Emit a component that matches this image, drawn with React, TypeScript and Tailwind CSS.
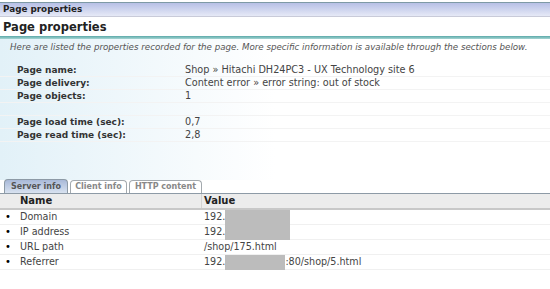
const props = [
  { label: 'Page name:', value: 'Shop » Hitachi DH24PC3 - UX Technology site 6' },
  { label: 'Page delivery:', value: 'Content error » error string: out of stock' },
  { label: 'Page objects:', value: '1' },
]

const times = [
  { label: 'Page load time (sec):', value: '0,7' },
  { label: 'Page read time (sec):', value: '2,8' },
]

const rows = [
  { name: 'Domain', prefix: '192.', hidden: 'w-[65px]', suffix: '' },
  { name: 'IP address', prefix: '192.', hidden: 'w-[65px]', suffix: '' },
  { name: 'URL path', prefix: '/shop/175.html', hidden: '', suffix: '' },
  { name: 'Referrer', prefix: '192.', hidden: 'w-[60px]', suffix: ':80/shop/5.html' },
]

function PropRow({ label, value }: { label: string; value: string }) {
  return (
    <div className="flex h-[13px] items-center border-b border-[#f3f3f3]">
      <div className="w-[185px] pl-[17px] font-bold text-[#333]">{label}</div>
      <div className="text-[9.7px] text-[#444]">{value}</div>
    </div>
  )
}

export default function App() {
  return (
    <div className="w-[550px] h-[289px] overflow-hidden bg-white text-[9px] leading-none" style={{ fontFamily: '"DejaVu Sans", Verdana, sans-serif' }}>
      {/* cut-off strip on top */}
      <div className="h-[3px] bg-white border-b border-[#7e9aa6]" />

      {/* window title bar */}
      <div className="h-[14px] flex items-center pl-[3px] font-bold text-[8.8px] text-[#222] bg-gradient-to-b from-[#b7c0e6] to-[#e6e9f6] border-b border-[#c9cbd9]">
        Page properties
      </div>

      {/* heading */}
      <div className="h-[19px] flex items-end pl-[3px] pb-[3px] font-bold text-[11.5px] text-[#222]">
        Page properties
      </div>
      <div className="h-[3px] bg-gradient-to-b from-[#5aa9a9] to-[#a6d6d4]" />

      {/* body */}
      <div className="bg-gradient-to-r from-[#e2f1f8] via-white to-white">
        <div className="pt-[4px] pl-[10px] h-[25px] italic text-[8.7px] text-[#555]">
          Here are listed the properties recorded for the page. More specific information is available through the sections below.
        </div>

        <div className="flex flex-col">
          {props.map((p) => (
            <PropRow key={p.label} {...p} />
          ))}
          <div className="h-[13px] border-b border-[#f3f3f3]" />
          {times.map((p) => (
            <PropRow key={p.label} {...p} />
          ))}
        </div>

        <div className="h-[38px]" />
      </div>

      {/* tabs */}
      <div className="flex items-end gap-[2px] pl-[4px] h-[14px] border-b border-[#8d9aa6]">
        <div className="h-[14px] w-[64px] flex items-center justify-center rounded-t-[4px] border border-b-0 border-[#8d9aa6] bg-gradient-to-b from-[#a9b9d8] to-[#d8e2f0] font-bold text-[8px] text-[#555]">
          Server info
        </div>
        <div className="h-[13px] w-[57px] flex items-center justify-center rounded-t-[4px] border border-b-0 border-[#a3a9ae] bg-white font-bold text-[8px] text-[#888]">
          Client info
        </div>
        <div className="h-[13px] w-[73px] flex items-center justify-center rounded-t-[4px] border border-b-0 border-[#a3a9ae] bg-white font-bold text-[8px] text-[#888]">
          HTTP content
        </div>
      </div>

      {/* table */}
      <div className="flex h-[16px] items-center bg-[#ececec] border-b-2 border-[#c8c8c8] font-bold text-[10px] text-[#222]">
        <div className="w-[202px] h-full flex items-center pl-[20px] border-r border-[#d4d4d4]">Name</div>
        <div className="pl-[2px]">Value</div>
      </div>
      {rows.map((r) => (
        <div key={r.name} className="flex h-[15px] items-center border-b border-[#f0f0f0] text-[#444] text-[9.6px]">
          <div className="w-[202px] flex items-center">
            <span className="w-[20px] pl-[5px] text-[10px] text-black">•</span>
            <span>{r.name}</span>
          </div>
          <div className="pl-[2px] flex items-center">
            <span>{r.prefix}</span>
            {r.hidden && <span className={`inline-block h-[15px] bg-[#bcbcbc] ${r.hidden}`} />}
            {r.suffix && <span>{r.suffix}</span>}
          </div>
        </div>
      ))}
    </div>
  )
}
